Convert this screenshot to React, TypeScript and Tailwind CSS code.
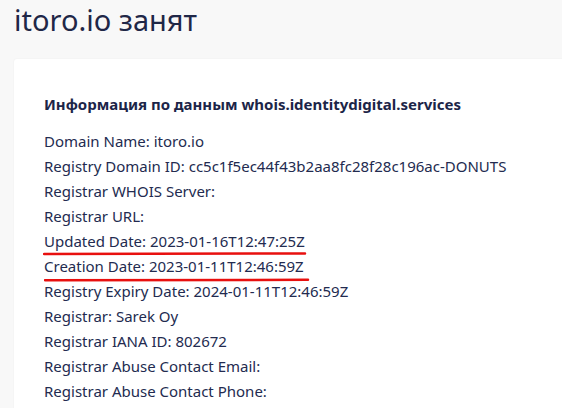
import React from "react";

const lines: { text: string; mark?: "a" | "b" }[] = [
  { text: "Domain Name: itoro.io" },
  { text: "Registry Domain ID: cc5c1f5ec44f43b2aa8fc28f28c196ac-DONUTS" },
  { text: "Registrar WHOIS Server:" },
  { text: "Registrar URL:" },
  { text: "Updated Date: 2023-01-16T12:47:25Z", mark: "a" },
  { text: "Creation Date: 2023-01-11T12:46:59Z", mark: "b" },
  { text: "Registry Expiry Date: 2024-01-11T12:46:59Z" },
  { text: "Registrar: Sarek Oy" },
  { text: "Registrar IANA ID: 802672" },
  { text: "Registrar Abuse Contact Email:" },
  { text: "Registrar Abuse Contact Phone:" },
];

export default function App() {
  return (
    <div
      className="w-[562px] h-[408px] overflow-hidden bg-[#f8f8f8] text-[#232b50]"
      style={{ fontFamily: '"Noto Sans", "Open Sans", sans-serif' }}
    >
      <h1 className="pl-[14px] pt-0 h-[59px] text-[29px] leading-[40px] font-normal text-[#1f2747]">
        itoro.io занят
      </h1>
      <div className="ml-[14px] w-[600px] bg-white rounded-[3px] shadow-[0_0_2px_rgba(0,0,0,0.06)] pl-[30px] pt-[34px] h-[400px]">
        <h2 className="text-[15px] font-bold leading-[22px] text-[#1c2548]">
          Информация по данным whois.identitydigital.services
        </h2>
        <div className="mt-[14px] text-[15px] leading-[25px]">
          {lines.map((l, i) => (
            <div key={i} className="relative">
              <span>{l.text}</span>
              {l.mark === "a" && (
                <svg className="absolute left-[-1px] top-[22px]" width="266" height="6">
                  <path d="M1 3 L262 2.5" stroke="#e8100f" strokeWidth="2.5" strokeLinecap="round" fill="none" />
                </svg>
              )}
              {l.mark === "b" && (
                <svg className="absolute left-[0px] top-[23px]" width="268" height="6">
                  <path d="M1 3.2 L264 2.8" stroke="#e8100f" strokeWidth="2.5" strokeLinecap="round" fill="none" />
                </svg>
              )}
            </div>
          ))}
        </div>
      </div>
    </div>
  );
}
